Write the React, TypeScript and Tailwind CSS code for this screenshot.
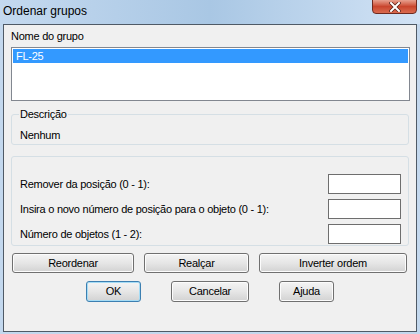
import React from 'react';

const font = { fontFamily: '"Liberation Sans", Arial, sans-serif' };

const Btn: React.FC<{ label: string; w: string; primary?: boolean; h?: string }> = ({ label, w, primary, h = 'h-[20px]' }) => (
  <button
    className={`${w} ${h} flex items-center justify-center rounded-[3px] border text-[11px] tracking-[-0.25px] text-black bg-linear-to-b from-[#f4f4f4] via-[#e6e6e6] to-[#d2d2d2] ${
      primary ? 'border-[#3c7fb1] shadow-[inset_0_0_0_1px_#a6dcf5]' : 'border-[#707070] shadow-[inset_0_0_0_1px_#fcfcfc]'
    }`}
  >
    {label}
  </button>
);

const NumField: React.FC<{ label: string }> = ({ label }) => (
  <div className="flex items-center justify-between">
    <span className="text-[11px] leading-[14px] tracking-[-0.25px] text-black">{label}</span>
    <input className="w-[73px] h-[20px] border border-[#6e6e6e] bg-white outline-none" />
  </div>
);

export default function App() {
  return (
    <div className="w-[420px] h-[334px] flex flex-col bg-[#c3d8ee]" style={font}>
      <div className="h-[24px] flex items-start justify-between bg-linear-to-r from-[#c4d9ef] via-[#a9c7e4] to-[#d2e3f5]">
        <span className="pl-[3px] pt-[3px] text-[12px] leading-[16px] text-black">Ordenar grupos</span>
        <div className="mr-[3px] w-[45px] h-[15px] -mt-px rounded-b-[4px] border border-[#6e2a20] bg-linear-to-b from-[#e7a08f] via-[#c9452d] to-[#d96a4f] flex items-center justify-center">
          <svg width="12" height="10" viewBox="0 0 12 10">
            <path d="M2 1 L10 9 M10 1 L2 9" stroke="#5a2018" strokeWidth="3.4" strokeLinecap="square" />
            <path d="M2 1 L10 9 M10 1 L2 9" stroke="#ffffff" strokeWidth="2" strokeLinecap="square" />
          </svg>
        </div>
      </div>
      <div className="flex-1 ml-[3px] mr-[3px] mb-[2px] border border-[#4f5a66] bg-[#f0f0f0] flex flex-col pl-[7px] pr-[6px] pt-[4px] tracking-[-0.25px]">
        <span className="text-[11px] leading-[14px] text-black">Nome do grupo</span>
        <div className="mt-[4px] h-[54px] border border-[#828790] bg-white p-px">
          <div className="h-[14px] bg-[#3399ff] text-white text-[11px] leading-[14px] pl-[3px]">FL-25</div>
        </div>
        <fieldset className="mt-[6px] mr-px border border-[#d5dfe5] rounded-[3px] pl-[8px] pb-[2px]">
          <legend className="text-[11px] leading-[14px] px-px -ml-px text-black">Descrição</legend>
          <div className="mt-[7px] text-[11px] leading-[14px] text-black">Nenhum</div>
        </fieldset>
        <div className="mt-[11px] mr-px border border-[#d5dfe5] rounded-[3px] pl-[8px] pr-[7px] pt-[17px] pb-px flex flex-col gap-[5px]">
          <NumField label="Remover da posição (0 - 1):" />
          <NumField label="Insira o novo número de posição para o objeto (0 - 1):" />
          <NumField label="Número de objetos (1 - 2):" />
        </div>
        <div className="mt-[7px] pl-px flex gap-[10px]">
          <Btn label="Reordenar" w="w-[122px]" />
          <Btn label="Realçar" w="w-[105px]" />
          <Btn label="Inverter ordem" w="w-[148px]" />
        </div>
        <div className="mt-[8px] pl-[75px] flex gap-[30px]">
          <Btn label="OK" w="w-[55px]" h="h-[21px]" primary />
          <Btn label="Cancelar" w="w-[78px]" h="h-[21px]" />
          <Btn label="Ajuda" w="w-[55px]" h="h-[21px]" />
        </div>
      </div>
    </div>
  );
}
